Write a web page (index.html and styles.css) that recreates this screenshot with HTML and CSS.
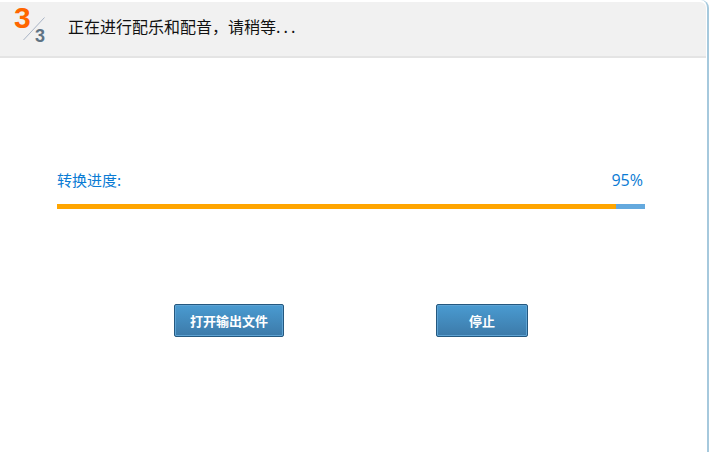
FILE: index.html
```html
<!DOCTYPE html>
<html lang="zh-CN">
<head>
    <meta charset="UTF-8">
    <meta name="viewport" content="width=device-width, initial-scale=1.0">
    <title>转换进度</title>
    <link rel="stylesheet" href="styles.css">
</head>
<body>
    <div class="panel">
        <div class="header">
            <div class="step">
                <span class="step-current">3</span>
                <svg class="step-slash" width="24" height="24" viewBox="0 0 24 24">
                    <line x1="0.5" y1="23" x2="21.5" y2="0.5" stroke="#a9b4c6" stroke-width="1"/>
                </svg>
                <span class="step-total">3</span>
            </div>
            <div class="header-text">正在进行配乐和配音，请稍等<span class="dots">...</span></div>
        </div>
        <div class="progress">
            <div class="progress-info">
                <span>转换进度:</span>
                <span class="progress-value">95%</span>
            </div>
            <div class="progress-track">
                <div class="progress-fill" style="width: 95%"></div>
            </div>
        </div>
        <div class="actions">
            <button class="btn btn-open" type="button">打开输出文件</button>
            <button class="btn btn-stop" type="button">停止</button>
        </div>
    </div>
</body>
</html>
```

FILE: styles.css
```css
html, body {
    margin: 0;
    padding: 0;
    background-color: #fff;
    overflow: hidden;
}
body {
    height: 452px;
    font-family: "Noto Sans CJK SC", "Liberation Sans", sans-serif;
}
.panel {
    box-sizing: border-box;
    width: 709px;
    height: 452px;
    padding-top: 2px;
    border-right: 2px solid #a6c9dd;
    border-top-right-radius: 8px;
}
.header {
    box-sizing: border-box;
    display: flex;
    align-items: center;
    width: 706px;
    height: 56px;
    background-color: #f1f1f1;
    border-bottom: 2px solid #e4e4e4;
    border-top-right-radius: 6px;
}
.step {
    position: relative;
    width: 68px;
    height: 54px;
    flex-shrink: 0;
}
.step-current {
    position: absolute;
    left: 14px;
    top: -1px;
    font-family: "Liberation Sans", sans-serif;
    font-size: 30px;
    line-height: 34px;
    font-weight: bold;
    color: #ff6600;
}
.step-slash {
    position: absolute;
    left: 23px;
    top: 15px;
}
.step-total {
    position: absolute;
    left: 35px;
    top: 24px;
    font-family: "Liberation Sans", sans-serif;
    font-size: 18px;
    line-height: 20px;
    font-weight: bold;
    color: #5f7384;
}
.header-text {
    font-size: 16px;
    line-height: 20px;
    color: #111;
    margin-bottom: 6px;
}
.dots {
    letter-spacing: 3px;
}
.progress {
    width: 588px;
    margin: 112px 0 0 57px;
}
.progress-info {
    display: flex;
    justify-content: space-between;
    font-size: 15px;
    line-height: 20px;
    color: #0a7bd4;
}
.progress-value {
    font-family: "Open Sans", sans-serif;
    font-size: 16px;
    margin-right: 2px;
}
.progress-track {
    height: 5px;
    margin-top: 14px;
    background-color: #64a9de;
}
.progress-fill {
    height: 100%;
    background-color: #ffa500;
}
.actions {
    display: flex;
    margin: 95px 0 0 174px;
}
.btn {
    box-sizing: border-box;
    height: 33px;
    padding: 0;
    border: 1px solid #24587f;
    border-radius: 2px;
    box-shadow: inset 0 0 0 1px #5fa3d3;
    background: linear-gradient(#4a9bd1, #3c7aa9);
    color: #fff;
    font-family: "Noto Sans CJK SC", sans-serif;
    font-size: 13px;
    font-weight: bold;
    cursor: pointer;
}
.btn-open {
    width: 110px;
}
.btn-stop {
    width: 92px;
    margin-left: 152px;
}
```
